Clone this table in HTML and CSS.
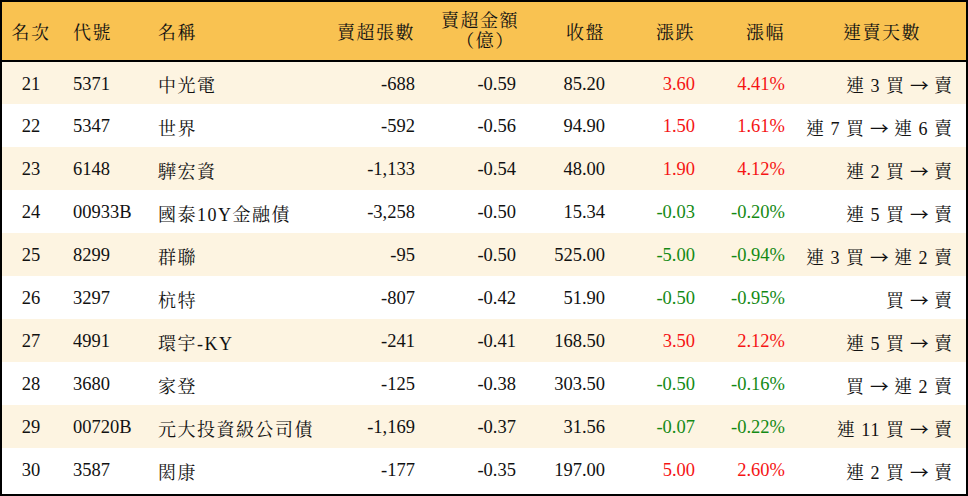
FILE: index.html
```html
<!DOCTYPE html>
<html lang="zh-Hant">
<head>
<meta charset="utf-8">
<title>賣超排行</title>
<link rel="stylesheet" href="styles.css">
</head>
<body>
<div class="frame">
<table class="rank">
  <colgroup>
    <col class="c-rank"><col class="c-code"><col class="c-name"><col class="c-vol"><col class="c-amt"><col class="c-close"><col class="c-chg"><col class="c-pct"><col class="c-days">
  </colgroup>
  <thead>
    <tr>
      <th class="ctr cjk">名次</th>
      <th class="lft cjk">代號</th>
      <th class="lft cjk">名稱</th>
      <th class="rgt cjk">賣超張數</th>
      <th class="rgt cjk two"><span class="l1">賣超金額</span><span class="l2">（億）</span></th>
      <th class="rgt cjk">收盤</th>
      <th class="rgt cjk">漲跌</th>
      <th class="rgt cjk">漲幅</th>
      <th class="ctr cjk">連賣天數</th>
    </tr>
  </thead>
  <tbody>
    <tr><td class="ctr">21</td><td>5371</td><td class="cjk">中光電</td><td class="rgt">-688</td><td class="rgt">-0.59</td><td class="rgt">85.20</td><td class="rgt up">3.60</td><td class="rgt up">4.41%</td><td class="rgt days">連 3 買 <span class="arr">→</span> 賣</td></tr>
    <tr><td class="ctr">22</td><td>5347</td><td class="cjk">世界</td><td class="rgt">-592</td><td class="rgt">-0.56</td><td class="rgt">94.90</td><td class="rgt up">1.50</td><td class="rgt up">1.61%</td><td class="rgt days">連 7 買 <span class="arr">→</span> 連 6 賣</td></tr>
    <tr><td class="ctr">23</td><td>6148</td><td class="cjk">驊宏資</td><td class="rgt">-1,133</td><td class="rgt">-0.54</td><td class="rgt">48.00</td><td class="rgt up">1.90</td><td class="rgt up">4.12%</td><td class="rgt days">連 2 買 <span class="arr">→</span> 賣</td></tr>
    <tr><td class="ctr">24</td><td>00933B</td><td class="cjk">國泰10Y金融債</td><td class="rgt">-3,258</td><td class="rgt">-0.50</td><td class="rgt">15.34</td><td class="rgt dn">-0.03</td><td class="rgt dn">-0.20%</td><td class="rgt days">連 5 買 <span class="arr">→</span> 賣</td></tr>
    <tr><td class="ctr">25</td><td>8299</td><td class="cjk">群聯</td><td class="rgt">-95</td><td class="rgt">-0.50</td><td class="rgt">525.00</td><td class="rgt dn">-5.00</td><td class="rgt dn">-0.94%</td><td class="rgt days">連 3 買 <span class="arr">→</span> 連 2 賣</td></tr>
    <tr><td class="ctr">26</td><td>3297</td><td class="cjk">杭特</td><td class="rgt">-807</td><td class="rgt">-0.42</td><td class="rgt">51.90</td><td class="rgt dn">-0.50</td><td class="rgt dn">-0.95%</td><td class="rgt days">買 <span class="arr">→</span> 賣</td></tr>
    <tr><td class="ctr">27</td><td>4991</td><td class="cjk">環宇-KY</td><td class="rgt">-241</td><td class="rgt">-0.41</td><td class="rgt">168.50</td><td class="rgt up">3.50</td><td class="rgt up">2.12%</td><td class="rgt days">連 5 買 <span class="arr">→</span> 賣</td></tr>
    <tr><td class="ctr">28</td><td>3680</td><td class="cjk">家登</td><td class="rgt">-125</td><td class="rgt">-0.38</td><td class="rgt">303.50</td><td class="rgt dn">-0.50</td><td class="rgt dn">-0.16%</td><td class="rgt days">買 <span class="arr">→</span> 連 2 賣</td></tr>
    <tr><td class="ctr">29</td><td>00720B</td><td class="cjk">元大投資級公司債</td><td class="rgt">-1,169</td><td class="rgt">-0.37</td><td class="rgt">31.56</td><td class="rgt dn">-0.07</td><td class="rgt dn">-0.22%</td><td class="rgt days">連 11 買 <span class="arr">→</span> 賣</td></tr>
    <tr><td class="ctr">30</td><td>3587</td><td class="cjk">閎康</td><td class="rgt">-177</td><td class="rgt">-0.35</td><td class="rgt">197.00</td><td class="rgt up">5.00</td><td class="rgt up">2.60%</td><td class="rgt days">連 2 買 <span class="arr">→</span> 賣</td></tr>
  </tbody>
</table>
</div>
</body>
</html>
```

FILE: styles.css
```css
html, body {
  margin: 0;
  padding: 0;
  background: #ffffff;
}

.frame {
  width: 968px;
  height: 496px;
  box-sizing: border-box;
  border: 2px solid #000;
  background: #ffffff;
  overflow: hidden;
}

.rank {
  width: 964px;
  border-collapse: collapse;
  table-layout: fixed;
  font-family: "Liberation Serif", "Noto Serif CJK TC", "Noto Sans CJK TC", serif;
  font-size: 18.5px;
  color: #111;
}

.c-rank { width: 58px; }
.c-code { width: 85px; }
.c-name { width: 155px; }
.c-vol { width: 128px; }
.c-amt { width: 101px; }
.c-close { width: 89px; }
.c-chg { width: 90px; }
.c-pct { width: 90px; }
.c-days { width: 168px; }

.rank thead tr {
  background: #f9c251;
  height: 59px;
  border-bottom: 2px solid #000;
}

.rank th {
  font-weight: normal;
  font-size: 18px;
  padding: 0 13px;
  vertical-align: middle;
  white-space: nowrap;
}

.rank th.two {
  line-height: 20px;
}

.rank th.two .l1,
.rank th.two .l2 {
  display: block;
}

.rank th.two .l2 {
  text-align: center;
  padding-left: 14px;
}

.rank tbody tr {
  height: 43px;
}

.rank tbody tr:nth-child(odd) {
  background: #fdf4e1;
}

.rank td {
  padding: 2px 13px 0;
  vertical-align: middle;
  white-space: nowrap;
  text-align: left;
}

.cjk {
  letter-spacing: 1.5px;
}

.rank td.cjk {
  font-size: 18px;
}

.rank td.days {
  font-size: 18px;
  letter-spacing: 1px;
  padding-left: 0;
  padding-right: 13px;
}

.arr {
  font-family: "Noto Sans CJK TC", sans-serif;
  font-size: 17px;
  display: inline-block;
  transform: scaleX(1.1);
}

.rank .ctr { text-align: center; }
.rank .lft { text-align: left; }
.rank .rgt { text-align: right; }

.rank td.ctr:first-child {
  padding: 2px 0 0;
}

.rank th.ctr:first-child {
  padding: 0;
}

.rank th.ctr:last-child {
  padding: 0;
}

.up { color: #f51414; }
.dn { color: #148a14; }
```
